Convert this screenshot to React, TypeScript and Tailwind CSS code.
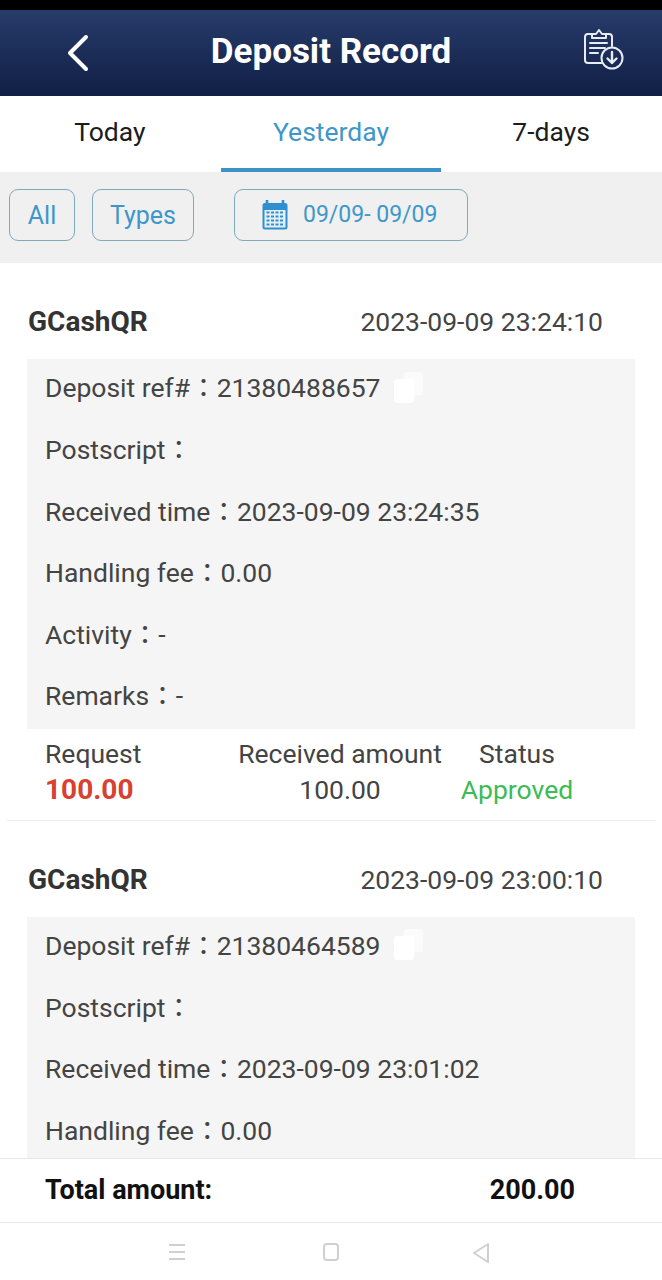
const rows = (ref: string, received: string) => [
  { label: "Deposit ref#", value: ref, copy: true },
  { label: "Postscript", value: "" },
  { label: "Received time", value: received },
  { label: "Handling fee", value: "0.00" },
  { label: "Activity", value: "-" },
  { label: "Remarks", value: "-" },
];

const records = [
  { time: "2023-09-09 23:24:10", ref: "21380488657", received: "2023-09-09 23:24:35" },
  { time: "2023-09-09 23:00:10", ref: "21380464589", received: "2023-09-09 23:01:02" },
];

function CopyIcon() {
  return (
    <svg width="31" height="33" viewBox="0 0 32 34" className="ml-[13px] shrink-0">
      <rect x="11" y="1" width="20" height="24" rx="4" fill="#fbfbfb" />
      <rect x="1" y="8" width="21" height="25" rx="4" fill="#ffffff" />
    </svg>
  );
}

function RecordCard({ time, ref: refNo, received }: { time: string; ref: string; received: string }) {
  return (
    <section className="mx-[7px] border-b border-[#ececec] px-5 pt-[39px] pb-[12px]">
      <div className="flex h-[40px] items-center justify-between pr-[32px] pl-[1px]">
        <span className="text-[28px] font-bold text-[#333333]">GCashQR</span>
        <span className="text-[26.500px] text-[#444444]">{time}</span>
      </div>
      <div className="mt-[17px] flex flex-col bg-[#f5f5f5] px-[18px]">
        {rows(refNo, received).map((row) => (
          <div key={row.label} className="flex h-[61.600px] items-center pb-[5px] text-[26.500px] text-[#444444]">
            <span className="whitespace-pre">
              {row.label}
              <span className="font-['Noto_Sans_CJK_TC']">：</span>
              {row.value}
            </span>
            {row.copy && <CopyIcon />}
          </div>
        ))}
      </div>
      <div className="mt-[7px] grid grid-cols-[194px_220px_1fr] text-[26.500px] leading-[36px] whitespace-nowrap text-[#444444]">
        <div className="pl-[18px]">
          <div>Request</div>
          <div className="text-[28px] font-bold text-[#d8402f]">100.00</div>
        </div>
        <div className="flex flex-col items-center pl-[18px]">
          <div>Received amount</div>
          <div>100.00</div>
        </div>
        <div className="pr-[42px] text-center">
          <div>Status</div>
          <div className="text-[#3dbb55]">Approved</div>
        </div>
      </div>
    </section>
  );
}

export default function App() {
  return (
    <div className="flex h-[1280px] w-[662px] flex-col overflow-hidden bg-white font-['Roboto',sans-serif]">
      <div className="h-[10px] shrink-0 bg-black" />

      <header className="relative flex h-[86px] shrink-0 items-center justify-center bg-gradient-to-b from-[#283c6b] to-[#101f45] pb-[2px]">
        <svg width="26" height="38" viewBox="0 0 26 38" className="absolute top-[24px] left-[65px]" fill="none" stroke="white" strokeWidth="4" strokeLinecap="round" strokeLinejoin="round">
          <path d="M21 3 5 19l16 16" />
        </svg>
        <h1 className="text-[35px] font-bold text-white">Deposit Record</h1>
        <svg width="42" height="42" viewBox="0 0 42 42" className="absolute top-[18px] right-[37px]" fill="none" stroke="#e8ebf3" strokeWidth="2" strokeLinecap="round" strokeLinejoin="round">
          <path d="M19 35H5a3 3 0 0 1-3-3V9a3 3 0 0 1 3-3h4M23 6h3a3 3 0 0 1 3 3v9" />
          <path d="M9 10V6h4l3-4 3 4h4v4z" />
          <path d="M7 15h17M7 20h15M7 25h8" />
          <circle cx="29" cy="30" r="10.500" />
          <path d="M29 24v11M24.500 30.500l4.500 4.500 4.500-4.500" strokeWidth="2.400" />
        </svg>
      </header>

      <nav className="grid h-[76px] shrink-0 grid-cols-3 text-[26.500px] text-[#1c1c1c]">
        <div className="flex items-center justify-center pr-[1px] pb-[4px]">Today</div>
        <div className="flex items-center justify-center border-b-[4px] border-[#3a92c6] text-[#3f97c9]">Yesterday</div>
        <div className="flex items-center justify-center pr-[1px] pb-[4px]">7-days</div>
      </nav>

      <div className="flex h-[91px] shrink-0 items-start bg-[#f0f0f0] pt-[17px] pl-[9px] text-[25px] text-[#3f97c9]">
        <button className="h-[52px] w-[66px] rounded-[9px] border border-[#7fa9bd] pt-[2px]">All</button>
        <button className="ml-[17px] h-[52px] w-[102px] rounded-[9px] border border-[#7fa9bd] pt-[2px]">Types</button>
        <button className="ml-[40px] flex h-[52px] w-[234px] items-center rounded-[9px] border border-[#7fa9bd] pl-[27px] text-[23px]">
          <svg width="26" height="30" viewBox="0 0 26 30" className="mr-[15px] shrink-0">
            <path d="M3 3h20a2.500 2.500 0 0 1 2.500 2.500V27a2.500 2.500 0 0 1-2.500 2.500H3A2.500 2.500 0 0 1 .5 27V5.500A2.500 2.500 0 0 1 3 3z" fill="#2f8fd0" />
            <rect x="2.500" y="10" width="21" height="17.500" fill="#e4f0f8" />
            <path d="M5 0.500v6M21 0.500v6" stroke="#2f8fd0" strokeWidth="2.600" strokeLinecap="round" />
            <path d="M4.500 12.500h17M4.500 16.500h17M4.500 20.500h17M4.500 24.500h17" stroke="#2f8fd0" strokeWidth="2" strokeDasharray="3 1.500" />
          </svg>
          09/09- 09/09
        </button>
      </div>

      <main className="min-h-0 flex-1 overflow-hidden">
        {records.map((r) => (
          <RecordCard key={r.ref} {...r} />
        ))}
      </main>

      <div className="flex h-[65px] shrink-0 items-center justify-between border-t border-b border-[#e8e8e8] bg-white pr-[87px] pl-[45px] text-[27px] font-bold text-[#111111]">
        <span>Total amount:</span>
        <span>200.00</span>
      </div>

      <div className="flex h-[57px] shrink-0 items-center justify-center bg-white">
        <div className="grid w-[462px] grid-cols-3 justify-items-center pt-[2px]">
          <svg width="18" height="18" viewBox="0 0 18 18" stroke="#d0d0d0" strokeWidth="2">
            <path d="M1 2h16M1 9h16M1 16h16" />
          </svg>
          <svg width="18" height="18" viewBox="0 0 18 18" fill="none" stroke="#d0d0d0" strokeWidth="2">
            <rect x="2" y="1" width="14" height="16" rx="3" />
          </svg>
          <svg width="18" height="20" viewBox="0 0 18 20" fill="none" stroke="#d0d0d0" strokeWidth="2" strokeLinejoin="round" className="mr-[8px]">
            <path d="M16 1v18L2 10z" />
          </svg>
        </div>
      </div>
    </div>
  );
}
